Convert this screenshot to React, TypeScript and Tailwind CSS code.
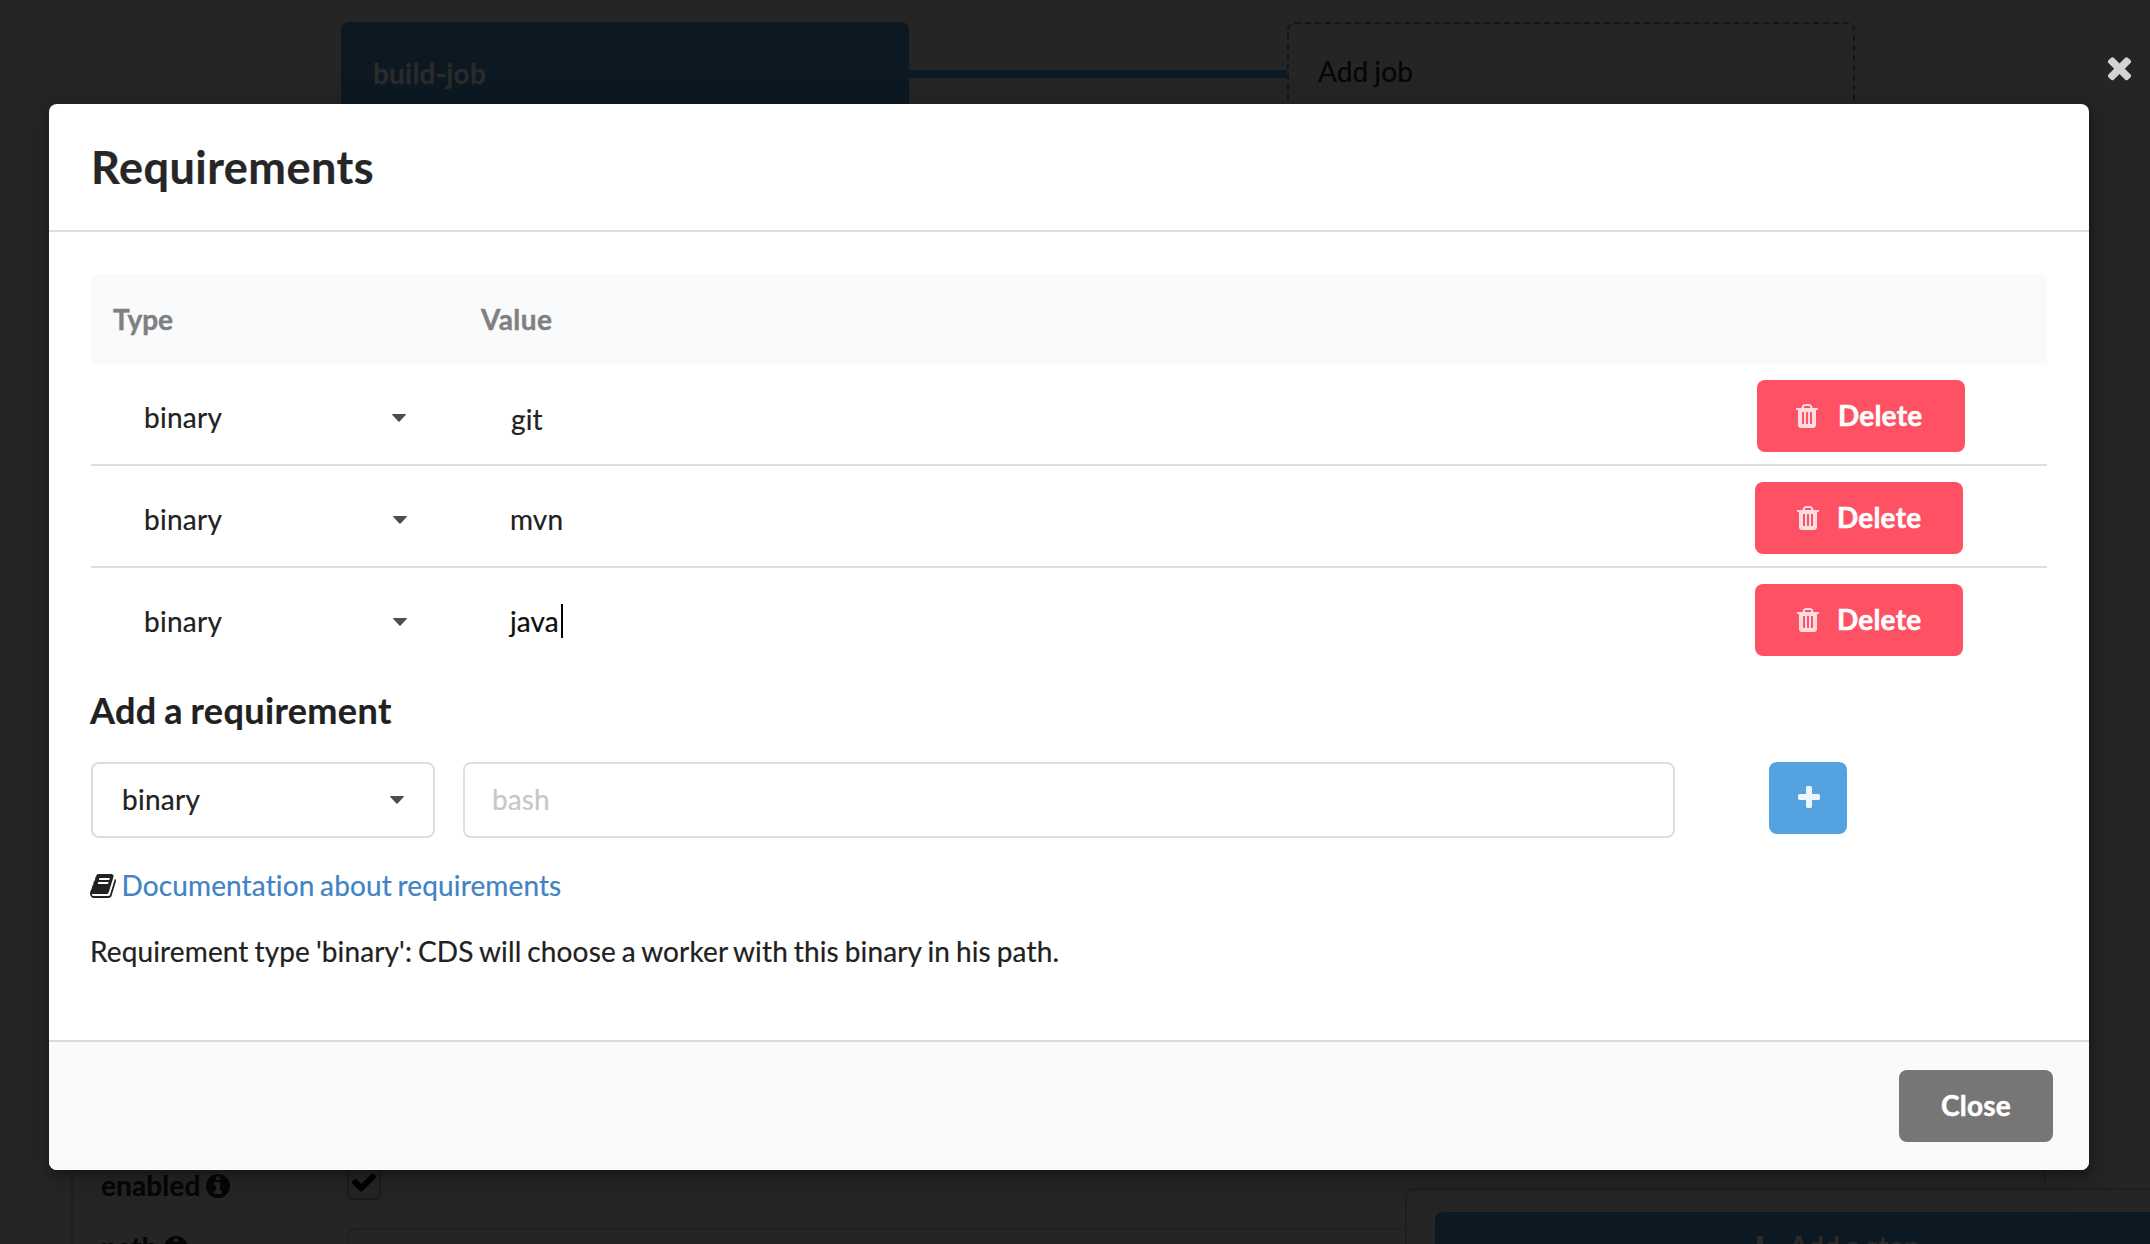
import React from 'react';

const PATHS = {
  times:
    'M1490 1322q0 40-28 68l-136 136q-28 28-68 28t-68-28l-294-294-294 294q-28 28-68 28t-68-28l-136-136q-28-28-28-68t28-68l294-294-294-294q-28-28-28-68t28-68l136-136q28-28 68-28t68 28l294 294 294-294q28-28 68-28t68 28l136 136q28 28 28 68t-28 68l-294 294 294 294q28 28 28 68z',
  plus: 'M1600 736v192q0 40-28 68t-68 28h-416v416q0 40-28 68t-68 28h-192q-40 0-68-28t-28-68v-416h-416q-40 0-68-28t-28-68v-192q0-40 28-68t68-28h416v-416q0-40 28-68t68-28h192q40 0 68 28t28 68v416h416q40 0 68 28t28 68z',
  trash:
    'M704 1376v-704q0-14-9-23t-23-9h-64q-14 0-23 9t-9 23v704q0 14 9 23t23 9h64q14 0 23-9t9-23zm256 0v-704q0-14-9-23t-23-9h-64q-14 0-23 9t-9 23v704q0 14 9 23t23 9h64q14 0 23-9t9-23zm256 0v-704q0-14-9-23t-23-9h-64q-14 0-23 9t-9 23v704q0 14 9 23t23 9h64q14 0 23-9t9-23zm-544-992h448l-48-117q-7-9-17-11h-317q-10 2-17 11zm928 32v64q0 14-9 23t-23 9h-96v948q0 83-47 143.5t-113 60.5h-832q-66 0-113-58.5t-47-141.5v-952h-96q-14 0-23-9t-9-23v-64q0-14 9-23t23-9h309l70-167q15-37 54-63t79-26h320q40 0 79 26t54 63l70 167h309q14 0 23 9t9 23z',
  book: 'M1639 478q40 57 18 129l-275 906q-19 64-76.5 107.5t-122.5 43.5h-923q-77 0-148.5-53.5t-99.5-131.5q-24-67-2-127 0-4 3-27t4-37q1-8-3-21.5t-3-19.5q2-11 8-21t16.5-23.5 16.5-23.5q23-38 45-91.5t30-91.5q3-10 .5-30t-.5-28q3-11 17-28t17-23q21-36 42-92t25-90q1-9-2.5-32t.5-28q4-13 22-30.5t22-22.5q19-26 42.5-84.5t27.5-96.5q1-8-3-25.5t-2-26.5q2-8 9-18t18-23 17-21q8-12 16.5-30.5t15-35 16-36 19.5-32 26.5-23.5 36-11.5 47.5 5.5l-1 3q38-9 51-9h761q74 0 114 56t18 130l-274 906q-36 119-71.5 153.5t-128.5 34.5h-869q-27 0-38 15-11 16-1 43 24 70 144 70h923q29 0 56-15.5t35-41.5l300-987q7-22 5-57 38 15 59 43zm-1064 2q-4 13 2 22.5t20 9.5h608q13 0 25.5-9.5t16.5-22.5l21-64q4-13-2-22.5t-20-9.5h-608q-13 0-25.5 9.5t-16.5 22.5zm-83 256q-4 13 2 22.5t20 9.5h608q13 0 25.5-9.5t16.5-22.5l21-64q4-13-2-22.5t-20-9.5h-608q-13 0-25.5 9.5t-16.5 22.5z',
  info: 'M1152 1376v-160q0-14-9-23t-23-9h-96v-512q0-14-9-23t-23-9h-320q-14 0-23 9t-9 23v160q0 14 9 23t23 9h96v320h-96q-14 0-23 9t-9 23v160q0 14 9 23t23 9h448q14 0 23-9t9-23zm-128-896v-160q0-14-9-23t-23-9h-192q-14 0-23 9t-9 23v160q0 14 9 23t23 9h192q14 0 23-9t9-23zm640 416q0 209-103 385.5t-279.5 279.5-385.5 103-385.5-103-279.5-279.5-103-385.5 103-385.5 279.5-279.5 385.5-103 385.5 103 279.5 279.5 103 385.5z',
  check:
    'M1671 566q0 40-28 68l-724 724-136 136q-28 28-68 28t-68-28l-136-136-362-362q-28-28-28-68t28-68l136-136q28-28 68-28t68 28l294 295 656-657q28-28 68-28t68 28l136 136q28 28 28 68z',
};

function Icon({ name, className = '' }: { name: keyof typeof PATHS; className?: string }) {
  return (
    <svg viewBox="0 0 1792 1792" fill="currentColor" className={`block shrink-0 ${className}`}>
      <path d={PATHS[name]} />
    </svg>
  );
}

function Caret() {
  return (
    <svg viewBox="0 0 14 8" className="block h-2 w-3.5 shrink-0 fill-[#4d4d4d]">
      <path d="M0.6 0h12.8q.9.3.3 1L7.6 7.6q-.6.5-1.2 0L.3 1q-.6-.7.3-1z" />
    </svg>
  );
}

function Workflow() {
  return (
    <div className="flex h-[300px] items-start pt-[22px] pl-[341px]">
      <div className="h-[120px] w-[568px] rounded-lg bg-[#0c1922] pt-[31px] pl-8 font-bold tracking-[0.2px] text-[#2b2b2b] [-webkit-text-stroke:0.3px]">
        build-job
      </div>
      <div className="mt-12 h-2 w-[378px] bg-[#0c1922]" />
      <div className="h-[120px] w-[568px] rounded-lg border-2 border-dashed border-[#151515] pt-[27px] pl-[29px] text-[#060606] [word-spacing:-1.3px]">
        Add job
      </div>
    </div>
  );
}

function FieldLabel({ children }: { children: string }) {
  return (
    <div className="flex w-[246px] items-center font-bold">
      <span>{children}</span>
      <Icon name="info" className="mt-0.5 ml-1 size-7" />
    </div>
  );
}

function StepForm() {
  return (
    <div className="mr-[104px] ml-[71px] flex h-[400px] flex-col border-x-2 border-[#202020] pt-[59px] pl-7 text-[#060606]">
      <div className="flex h-[62px] items-start">
        <FieldLabel>enabled</FieldLabel>
        <div className="mt-px flex h-[34px] w-[34px] items-center justify-center rounded-md border-2 border-[#1b1b1b] pb-0.5 text-black">
          <Icon name="check" className="size-7" />
        </div>
      </div>
      <div className="flex items-start">
        <FieldLabel>path</FieldLabel>
        <div className="mt-px h-[76px] flex-1 rounded-lg border-2 border-[#202020]" />
      </div>
    </div>
  );
}

function Backdrop() {
  return (
    <div className="h-full">
      <Workflow />
      <div className="h-[806px]" />
      <StepForm />
      <div className="absolute top-[1188px] left-[1405px] h-[120px] w-[800px] rounded-lg border-2 border-[#1f1f1f] bg-[#252525] pt-[22px] pl-7">
        <div className="flex h-[76px] items-start rounded-lg bg-[#0c1922] pt-3.5 pl-[311px] font-bold text-[#2b2b2b] [word-spacing:-1.3px]">
          <Icon name="plus" className="mt-2 mr-[15px] size-7" />
          Add a step
        </div>
      </div>
    </div>
  );
}

function Row({ value, first, last, focused }: { value: string; first?: boolean; last?: boolean; focused?: boolean }) {
  return (
    <div className={`flex w-full border-[#dededf] ${last ? 'h-[100px]' : 'h-[102px] border-b-2'}`}>
      <div className={`flex items-center pt-1.5 pl-[53px] ${first ? 'w-[315px]' : 'w-[316px]'}`}>
        <span className="flex-1 tracking-[0.25px]">binary</span>
        <span className="mt-0.5">
          <Caret />
        </span>
      </div>
      <div
        className={`flex flex-1 items-center ${first ? 'pt-2.5 pl-[105px]' : 'pt-1.5 pl-[103px]'} ${focused ? 'text-[#0d0d0d]' : ''}`}
      >
        <span>{value}</span>
        {focused && <span className="ml-0.5 h-[34px] w-0.5 bg-black" />}
      </div>
      <div className={`pt-4 ${first ? 'mr-[82px]' : 'mr-[84px]'}`}>
        <button
          className={`flex h-[72px] w-[208px] items-center rounded-lg bg-[#ff5164] font-bold tracking-[0.2px] text-white [-webkit-text-stroke:0.5px] ${first ? 'pl-9' : 'pl-[39px]'}`}
        >
          <Icon name="trash" className={`size-7 opacity-80 ${first ? 'mr-[17px]' : 'mr-[15px]'}`} />
          <span className="-mt-0.5">Delete</span>
        </button>
      </div>
    </div>
  );
}

function Modal() {
  return (
    <div className="flex h-[1066px] w-[2040px] flex-col overflow-hidden rounded-lg bg-white">
      <div className="h-32 border-b-2 border-[#dededf] pt-9 pl-[42px] text-[45px] leading-[54px] font-bold tracking-[0.48px] text-[#262626]">
        Requirements
      </div>
      <div className="flex flex-1 flex-col px-[42px] pt-[42px]">
        <div className="flex h-[90px] items-center rounded-t-lg bg-[#f9fafc] pl-[22px] font-bold text-[#808080] [-webkit-text-stroke:0.4px]">
          <span className="w-[368px] tracking-normal">Type</span>
          <span className="tracking-[0.4px]">Value</span>
        </div>
        <Row value="git" first />
        <Row value="mvn" />
        <Row value="java" last focused />
        <h3 className="mt-[19px] -ml-px text-[36px] leading-[46px] font-bold tracking-[0.38px] [word-spacing:-1.5px]">
          Add a requirement
        </h3>
        <div className="mt-[29px] flex items-start">
          <div className="flex h-[76px] w-[344px] items-center justify-between rounded-lg border-2 border-[#dededf] pr-[29px] pl-[29px]">
            <span className="-mt-0.5 tracking-[0.25px]">binary</span>
            <Caret />
          </div>
          <div className="ml-7 flex h-[76px] w-[1212px] items-center rounded-lg border-2 border-[#dededf] pb-0.5 pl-[27px] text-[#c7c7c7]">
            bash
          </div>
          <button className="ml-[94px] flex h-[72px] w-[78px] items-center justify-center rounded-lg bg-[#54a3e0] pb-px pl-px text-white">
            <Icon name="plus" className="size-7 opacity-90" />
          </button>
        </div>
        <div className="mt-[27px] flex items-center">
          <Icon name="book" className="mt-0.5 -ml-px size-7" />
          <a className="ml-[3.5px] text-[#4183c4] tracking-[0.13px] [word-spacing:-1.6px]">Documentation about requirements</a>
        </div>
        <p className="mt-[26px] -ml-px tracking-[0.13px] [word-spacing:-1.35px]">
          Requirement type 'binary': CDS will choose a worker with this binary in his path.
        </p>
      </div>
      <div className="flex h-[130px] justify-end border-t-2 border-[#dadbdc] bg-[#f9fafc] pt-7 pr-9">
        <button className="h-[72px] w-[154px] rounded-lg bg-[#767676] pb-0.5 font-bold tracking-[0.25px] text-white [-webkit-text-stroke:0.5px]">
          Close
        </button>
      </div>
    </div>
  );
}

export default function App() {
  return (
    <div className="relative h-[1244px] w-[2150px] overflow-hidden bg-[#252525] font-['Lato',sans-serif] text-[28px] leading-10 tracking-[0.11px] text-[#212121] [-webkit-text-stroke:0.2px]">
      <Backdrop />
      <div className="absolute top-[104px] left-[49px] rounded-lg shadow-[2px_6px_6px_0_rgba(0,0,0,0.2),2px_6px_30px_4px_rgba(0,0,0,0.2)]">
        <Modal />
      </div>
      <button className="absolute top-[50px] left-[2102px] text-[#d3d3d3]">
        <Icon name="times" className="size-[35px]" />
      </button>
    </div>
  );
}
